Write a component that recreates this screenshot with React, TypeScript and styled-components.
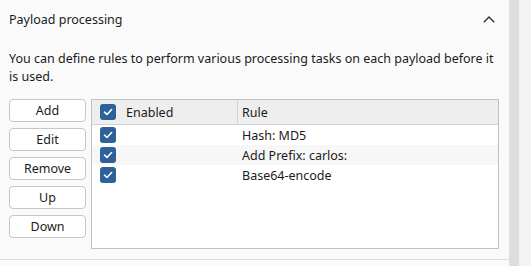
import styled, { createGlobalStyle } from "styled-components";

const GlobalStyle = createGlobalStyle`
  html, body {
    margin: 0;
    padding: 0;
    background: #fafafa;
  }
  body {
    font-family: "Noto Sans", "Open Sans", sans-serif;
    font-size: 12.5px;
    color: #1b1b1b;
  }
`;

const Page = styled.div`
  display: flex;
  height: 266px;
  overflow: hidden;
`;

const Panel = styled.section`
  width: 509px;
  box-sizing: border-box;
  padding: 0 10px 0 9px;
  background: #fafafa;
  border-bottom: 1px solid #dcdcdc;
  height: 260px;
`;

const Header = styled.div`
  display: flex;
  align-items: center;
  justify-content: space-between;
  height: 38px;
`;

const Title = styled.h2`
  margin: 0;
  font-size: 12.5px;
  font-weight: 400;
`;

const Chevron = styled.svg`
  margin-right: 4px;
`;

const Description = styled.p`
  margin: 12px 0 0;
  line-height: 18px;
`;

const Content = styled.div`
  display: flex;
  gap: 5px;
  margin-top: 13px;
`;

const ButtonColumn = styled.div`
  display: flex;
  flex-direction: column;
  gap: 6px;
  width: 77px;
`;

const Button = styled.button`
  all: unset;
  box-sizing: border-box;
  height: 23px;
  border: 1px solid #c6c6c6;
  border-radius: 4px;
  background: #ffffff;
  text-align: center;
  font-family: inherit;
  font-size: 12.5px;
  line-height: 21px;
  color: #1b1b1b;
`;

const Table = styled.div`
  flex: 1;
  height: 150px;
  box-sizing: border-box;
  border: 1px solid #c3bfc3;
  background: #ffffff;
`;

const Row = styled.div<{ $head?: boolean; $alt?: boolean }>`
  display: grid;
  grid-template-columns: 145px 1fr;
  height: ${(p) => (p.$head ? "24px" : "20px")};
  background: ${(p) => (p.$head ? "#eeeeee" : p.$alt ? "#f7f7f7" : "#ffffff")};
  border-bottom: ${(p) => (p.$head ? "1px solid #d4d4d4" : "none")};
`;

const Cell = styled.div<{ $head?: boolean; $rule?: boolean }>`
  display: flex;
  align-items: center;
  gap: 10px;
  padding-left: ${(p) => (p.$rule ? (p.$head ? "4px" : "5px") : "8px")};
  border-left: ${(p) => (p.$rule && p.$head ? "1px solid #d4d4d4" : "none")};
  white-space: nowrap;
`;

const Check = styled.span`
  display: inline-flex;
  align-items: center;
  justify-content: center;
  width: 16px;
  height: 16px;
  border-radius: 3px;
  background: #2c6199;
`;

const Scrollbar = styled.div`
  display: flex;
  flex: 1;
`;

const Track = styled.div`
  width: 10px;
  background: #dedede;
`;

const Gutter = styled.div`
  flex: 1;
  background: #f3f3f3;
`;

const CheckBox = () => (
  <Check>
    <svg width="10" height="8" viewBox="0 0 10 8">
      <path d="M1.5 4.2 L4 6.5 L8.6 1.5" fill="none" stroke="#fff" strokeWidth="1.6" strokeLinecap="round" strokeLinejoin="round" />
    </svg>
  </Check>
);

const rules = ["Hash: MD5", "Add Prefix: carlos:", "Base64-encode"];

export default function App() {
  return (
    <>
      <GlobalStyle />
      <Page>
        <Panel>
          <Header>
            <Title>Payload processing</Title>
            <Chevron width="12" height="7" viewBox="0 0 12 7">
              <path d="M0.8 6.2 L6 1 L11.2 6.2" fill="none" stroke="#333" strokeWidth="1.4" />
            </Chevron>
          </Header>
          <Description>
            You can define rules to perform various processing tasks on each payload before it is used.
          </Description>
          <Content>
            <ButtonColumn>
              <Button>Add</Button>
              <Button>Edit</Button>
              <Button>Remove</Button>
              <Button>Up</Button>
              <Button>Down</Button>
            </ButtonColumn>
            <Table>
              <Row $head>
                <Cell $head>
                  <CheckBox />
                  Enabled
                </Cell>
                <Cell $head $rule>Rule</Cell>
              </Row>
              {rules.map((r, i) => (
                <Row key={r} $alt={i % 2 === 1}>
                  <Cell>
                    <CheckBox />
                  </Cell>
                  <Cell $rule>{r}</Cell>
                </Row>
              ))}
            </Table>
          </Content>
        </Panel>
        <Scrollbar>
          <Track />
          <Gutter />
        </Scrollbar>
      </Page>
    </>
  );
}
